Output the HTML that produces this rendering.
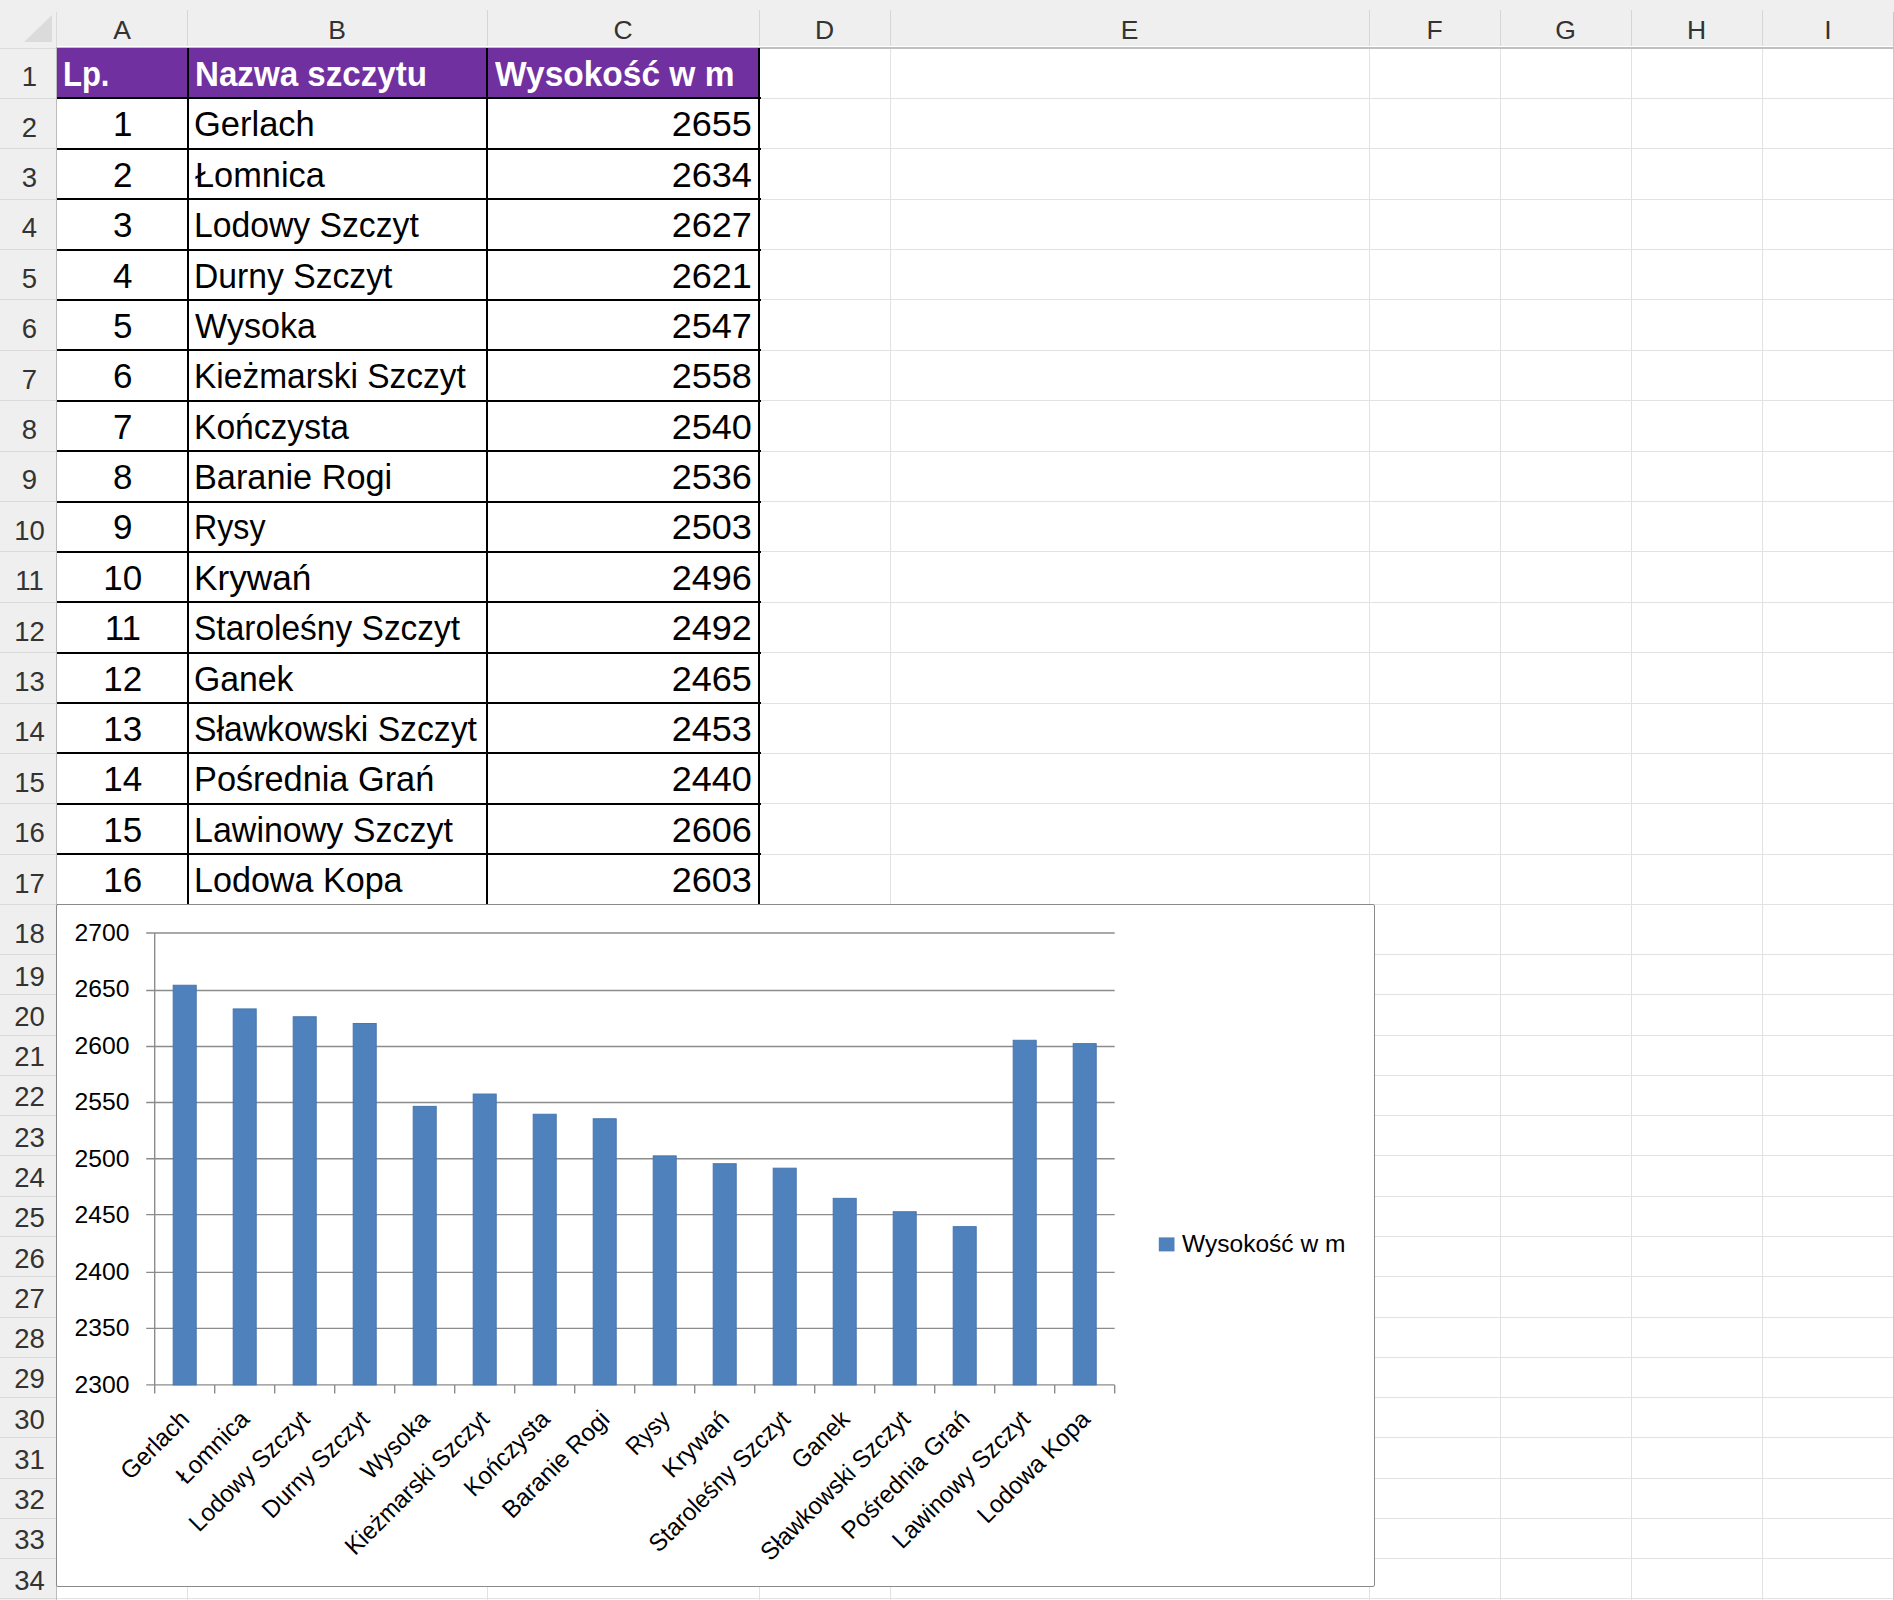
<!DOCTYPE html>
<html><head><meta charset="utf-8"><style>
html,body{margin:0;padding:0;width:1894px;height:1600px;overflow:hidden;background:#fff}
.r{position:absolute}
.t{position:absolute;white-space:pre;font-family:"Liberation Sans", sans-serif}
</style></head><body>
<div class="r" style="left:0.00px;top:0.00px;width:1894.00px;height:47.00px;background:#efefef;"></div>
<div class="r" style="left:0.00px;top:0.00px;width:56.00px;height:1600.00px;background:#efefef;"></div>
<svg class="r" style="left:0;top:0" width="57" height="47"><polygon points="24,42 52,15 52,42" fill="#dbdbdb"/></svg>
<div class="r" style="left:186.50px;top:47.00px;width:1.00px;height:1553.00px;background:#e2e2e2;"></div>
<div class="r" style="left:486.50px;top:47.00px;width:1.00px;height:1553.00px;background:#e2e2e2;"></div>
<div class="r" style="left:758.50px;top:47.00px;width:1.00px;height:1553.00px;background:#e2e2e2;"></div>
<div class="r" style="left:889.50px;top:47.00px;width:1.00px;height:1553.00px;background:#e2e2e2;"></div>
<div class="r" style="left:1368.50px;top:47.00px;width:1.00px;height:1553.00px;background:#e2e2e2;"></div>
<div class="r" style="left:1499.50px;top:47.00px;width:1.00px;height:1553.00px;background:#e2e2e2;"></div>
<div class="r" style="left:1630.50px;top:47.00px;width:1.00px;height:1553.00px;background:#e2e2e2;"></div>
<div class="r" style="left:1761.50px;top:47.00px;width:1.00px;height:1553.00px;background:#e2e2e2;"></div>
<div class="r" style="left:57.00px;top:97.89px;width:1837.00px;height:1.00px;background:#e2e2e2;"></div>
<div class="r" style="left:57.00px;top:148.28px;width:1837.00px;height:1.00px;background:#e2e2e2;"></div>
<div class="r" style="left:57.00px;top:198.67px;width:1837.00px;height:1.00px;background:#e2e2e2;"></div>
<div class="r" style="left:57.00px;top:249.06px;width:1837.00px;height:1.00px;background:#e2e2e2;"></div>
<div class="r" style="left:57.00px;top:299.45px;width:1837.00px;height:1.00px;background:#e2e2e2;"></div>
<div class="r" style="left:57.00px;top:349.84px;width:1837.00px;height:1.00px;background:#e2e2e2;"></div>
<div class="r" style="left:57.00px;top:400.23px;width:1837.00px;height:1.00px;background:#e2e2e2;"></div>
<div class="r" style="left:57.00px;top:450.62px;width:1837.00px;height:1.00px;background:#e2e2e2;"></div>
<div class="r" style="left:57.00px;top:501.01px;width:1837.00px;height:1.00px;background:#e2e2e2;"></div>
<div class="r" style="left:57.00px;top:551.40px;width:1837.00px;height:1.00px;background:#e2e2e2;"></div>
<div class="r" style="left:57.00px;top:601.79px;width:1837.00px;height:1.00px;background:#e2e2e2;"></div>
<div class="r" style="left:57.00px;top:652.18px;width:1837.00px;height:1.00px;background:#e2e2e2;"></div>
<div class="r" style="left:57.00px;top:702.57px;width:1837.00px;height:1.00px;background:#e2e2e2;"></div>
<div class="r" style="left:57.00px;top:752.96px;width:1837.00px;height:1.00px;background:#e2e2e2;"></div>
<div class="r" style="left:57.00px;top:803.35px;width:1837.00px;height:1.00px;background:#e2e2e2;"></div>
<div class="r" style="left:57.00px;top:853.74px;width:1837.00px;height:1.00px;background:#e2e2e2;"></div>
<div class="r" style="left:57.00px;top:904.13px;width:1837.00px;height:1.00px;background:#e2e2e2;"></div>
<div class="r" style="left:57.00px;top:954.10px;width:1837.00px;height:1.00px;background:#e2e2e2;"></div>
<div class="r" style="left:57.00px;top:994.37px;width:1837.00px;height:1.00px;background:#e2e2e2;"></div>
<div class="r" style="left:57.00px;top:1034.64px;width:1837.00px;height:1.00px;background:#e2e2e2;"></div>
<div class="r" style="left:57.00px;top:1074.91px;width:1837.00px;height:1.00px;background:#e2e2e2;"></div>
<div class="r" style="left:57.00px;top:1115.18px;width:1837.00px;height:1.00px;background:#e2e2e2;"></div>
<div class="r" style="left:57.00px;top:1155.45px;width:1837.00px;height:1.00px;background:#e2e2e2;"></div>
<div class="r" style="left:57.00px;top:1195.72px;width:1837.00px;height:1.00px;background:#e2e2e2;"></div>
<div class="r" style="left:57.00px;top:1235.99px;width:1837.00px;height:1.00px;background:#e2e2e2;"></div>
<div class="r" style="left:57.00px;top:1276.26px;width:1837.00px;height:1.00px;background:#e2e2e2;"></div>
<div class="r" style="left:57.00px;top:1316.53px;width:1837.00px;height:1.00px;background:#e2e2e2;"></div>
<div class="r" style="left:57.00px;top:1356.80px;width:1837.00px;height:1.00px;background:#e2e2e2;"></div>
<div class="r" style="left:57.00px;top:1397.07px;width:1837.00px;height:1.00px;background:#e2e2e2;"></div>
<div class="r" style="left:57.00px;top:1437.34px;width:1837.00px;height:1.00px;background:#e2e2e2;"></div>
<div class="r" style="left:57.00px;top:1477.61px;width:1837.00px;height:1.00px;background:#e2e2e2;"></div>
<div class="r" style="left:57.00px;top:1517.88px;width:1837.00px;height:1.00px;background:#e2e2e2;"></div>
<div class="r" style="left:57.00px;top:1558.15px;width:1837.00px;height:1.00px;background:#e2e2e2;"></div>
<div class="r" style="left:57.00px;top:1598.42px;width:1837.00px;height:1.00px;background:#e2e2e2;"></div>
<div class="r" style="left:186.50px;top:10.00px;width:1.00px;height:37.00px;background:#d6d6d6;"></div>
<div class="r" style="left:486.50px;top:10.00px;width:1.00px;height:37.00px;background:#d6d6d6;"></div>
<div class="r" style="left:758.50px;top:10.00px;width:1.00px;height:37.00px;background:#d6d6d6;"></div>
<div class="r" style="left:889.50px;top:10.00px;width:1.00px;height:37.00px;background:#d6d6d6;"></div>
<div class="r" style="left:1368.50px;top:10.00px;width:1.00px;height:37.00px;background:#d6d6d6;"></div>
<div class="r" style="left:1499.50px;top:10.00px;width:1.00px;height:37.00px;background:#d6d6d6;"></div>
<div class="r" style="left:1630.50px;top:10.00px;width:1.00px;height:37.00px;background:#d6d6d6;"></div>
<div class="r" style="left:1761.50px;top:10.00px;width:1.00px;height:37.00px;background:#d6d6d6;"></div>
<div class="r" style="left:0.00px;top:97.89px;width:56.00px;height:1.00px;background:#dadada;"></div>
<div class="r" style="left:0.00px;top:148.28px;width:56.00px;height:1.00px;background:#dadada;"></div>
<div class="r" style="left:0.00px;top:198.67px;width:56.00px;height:1.00px;background:#dadada;"></div>
<div class="r" style="left:0.00px;top:249.06px;width:56.00px;height:1.00px;background:#dadada;"></div>
<div class="r" style="left:0.00px;top:299.45px;width:56.00px;height:1.00px;background:#dadada;"></div>
<div class="r" style="left:0.00px;top:349.84px;width:56.00px;height:1.00px;background:#dadada;"></div>
<div class="r" style="left:0.00px;top:400.23px;width:56.00px;height:1.00px;background:#dadada;"></div>
<div class="r" style="left:0.00px;top:450.62px;width:56.00px;height:1.00px;background:#dadada;"></div>
<div class="r" style="left:0.00px;top:501.01px;width:56.00px;height:1.00px;background:#dadada;"></div>
<div class="r" style="left:0.00px;top:551.40px;width:56.00px;height:1.00px;background:#dadada;"></div>
<div class="r" style="left:0.00px;top:601.79px;width:56.00px;height:1.00px;background:#dadada;"></div>
<div class="r" style="left:0.00px;top:652.18px;width:56.00px;height:1.00px;background:#dadada;"></div>
<div class="r" style="left:0.00px;top:702.57px;width:56.00px;height:1.00px;background:#dadada;"></div>
<div class="r" style="left:0.00px;top:752.96px;width:56.00px;height:1.00px;background:#dadada;"></div>
<div class="r" style="left:0.00px;top:803.35px;width:56.00px;height:1.00px;background:#dadada;"></div>
<div class="r" style="left:0.00px;top:853.74px;width:56.00px;height:1.00px;background:#dadada;"></div>
<div class="r" style="left:0.00px;top:904.13px;width:56.00px;height:1.00px;background:#dadada;"></div>
<div class="r" style="left:0.00px;top:954.10px;width:56.00px;height:1.00px;background:#dadada;"></div>
<div class="r" style="left:0.00px;top:994.37px;width:56.00px;height:1.00px;background:#dadada;"></div>
<div class="r" style="left:0.00px;top:1034.64px;width:56.00px;height:1.00px;background:#dadada;"></div>
<div class="r" style="left:0.00px;top:1074.91px;width:56.00px;height:1.00px;background:#dadada;"></div>
<div class="r" style="left:0.00px;top:1115.18px;width:56.00px;height:1.00px;background:#dadada;"></div>
<div class="r" style="left:0.00px;top:1155.45px;width:56.00px;height:1.00px;background:#dadada;"></div>
<div class="r" style="left:0.00px;top:1195.72px;width:56.00px;height:1.00px;background:#dadada;"></div>
<div class="r" style="left:0.00px;top:1235.99px;width:56.00px;height:1.00px;background:#dadada;"></div>
<div class="r" style="left:0.00px;top:1276.26px;width:56.00px;height:1.00px;background:#dadada;"></div>
<div class="r" style="left:0.00px;top:1316.53px;width:56.00px;height:1.00px;background:#dadada;"></div>
<div class="r" style="left:0.00px;top:1356.80px;width:56.00px;height:1.00px;background:#dadada;"></div>
<div class="r" style="left:0.00px;top:1397.07px;width:56.00px;height:1.00px;background:#dadada;"></div>
<div class="r" style="left:0.00px;top:1437.34px;width:56.00px;height:1.00px;background:#dadada;"></div>
<div class="r" style="left:0.00px;top:1477.61px;width:56.00px;height:1.00px;background:#dadada;"></div>
<div class="r" style="left:0.00px;top:1517.88px;width:56.00px;height:1.00px;background:#dadada;"></div>
<div class="r" style="left:0.00px;top:1558.15px;width:56.00px;height:1.00px;background:#dadada;"></div>
<div class="r" style="left:0.00px;top:1598.42px;width:56.00px;height:1.00px;background:#dadada;"></div>
<div class="r" style="left:57.00px;top:46.00px;width:1837.00px;height:1.00px;background:#ffffff;"></div>
<div class="r" style="left:57.00px;top:47.00px;width:1837.00px;height:1.50px;background:#bfc1c1;"></div>
<div class="r" style="left:0.00px;top:47.50px;width:56.00px;height:1.00px;background:#dcdcdc;"></div>
<div class="r" style="left:56.00px;top:12.00px;width:1.00px;height:35.00px;background:#dadada;"></div>
<div class="r" style="left:56.00px;top:47.00px;width:1.20px;height:1553.00px;background:#bcbcbc;"></div>
<div class="r" style="left:1893.00px;top:12.00px;width:1.00px;height:1588.00px;background:#c8c8c8;"></div>
<div class="t" style="left:-78.00px;width:400px;text-align:center;top:16.77px;font-size:26.5px;line-height:26.5px;font-weight:400;color:#333;">A</div>
<div class="t" style="left:137.00px;width:400px;text-align:center;top:16.77px;font-size:26.5px;line-height:26.5px;font-weight:400;color:#333;">B</div>
<div class="t" style="left:423.00px;width:400px;text-align:center;top:16.77px;font-size:26.5px;line-height:26.5px;font-weight:400;color:#333;">C</div>
<div class="t" style="left:624.50px;width:400px;text-align:center;top:16.77px;font-size:26.5px;line-height:26.5px;font-weight:400;color:#333;">D</div>
<div class="t" style="left:929.50px;width:400px;text-align:center;top:16.77px;font-size:26.5px;line-height:26.5px;font-weight:400;color:#333;">E</div>
<div class="t" style="left:1234.50px;width:400px;text-align:center;top:16.77px;font-size:26.5px;line-height:26.5px;font-weight:400;color:#333;">F</div>
<div class="t" style="left:1365.50px;width:400px;text-align:center;top:16.77px;font-size:26.5px;line-height:26.5px;font-weight:400;color:#333;">G</div>
<div class="t" style="left:1496.50px;width:400px;text-align:center;top:16.77px;font-size:26.5px;line-height:26.5px;font-weight:400;color:#333;">H</div>
<div class="t" style="left:1628.00px;width:400px;text-align:center;top:16.77px;font-size:26.5px;line-height:26.5px;font-weight:400;color:#333;">I</div>
<div class="t" style="left:-170.50px;width:400px;text-align:center;top:63.32px;font-size:27.5px;line-height:27.5px;font-weight:400;color:#333;">1</div>
<div class="t" style="left:-170.50px;width:400px;text-align:center;top:113.71px;font-size:27.5px;line-height:27.5px;font-weight:400;color:#333;">2</div>
<div class="t" style="left:-170.50px;width:400px;text-align:center;top:164.10px;font-size:27.5px;line-height:27.5px;font-weight:400;color:#333;">3</div>
<div class="t" style="left:-170.50px;width:400px;text-align:center;top:214.49px;font-size:27.5px;line-height:27.5px;font-weight:400;color:#333;">4</div>
<div class="t" style="left:-170.50px;width:400px;text-align:center;top:264.88px;font-size:27.5px;line-height:27.5px;font-weight:400;color:#333;">5</div>
<div class="t" style="left:-170.50px;width:400px;text-align:center;top:315.27px;font-size:27.5px;line-height:27.5px;font-weight:400;color:#333;">6</div>
<div class="t" style="left:-170.50px;width:400px;text-align:center;top:365.66px;font-size:27.5px;line-height:27.5px;font-weight:400;color:#333;">7</div>
<div class="t" style="left:-170.50px;width:400px;text-align:center;top:416.05px;font-size:27.5px;line-height:27.5px;font-weight:400;color:#333;">8</div>
<div class="t" style="left:-170.50px;width:400px;text-align:center;top:466.44px;font-size:27.5px;line-height:27.5px;font-weight:400;color:#333;">9</div>
<div class="t" style="left:-170.50px;width:400px;text-align:center;top:516.83px;font-size:27.5px;line-height:27.5px;font-weight:400;color:#333;">10</div>
<div class="t" style="left:-170.50px;width:400px;text-align:center;top:567.22px;font-size:27.5px;line-height:27.5px;font-weight:400;color:#333;">11</div>
<div class="t" style="left:-170.50px;width:400px;text-align:center;top:617.61px;font-size:27.5px;line-height:27.5px;font-weight:400;color:#333;">12</div>
<div class="t" style="left:-170.50px;width:400px;text-align:center;top:668.00px;font-size:27.5px;line-height:27.5px;font-weight:400;color:#333;">13</div>
<div class="t" style="left:-170.50px;width:400px;text-align:center;top:718.39px;font-size:27.5px;line-height:27.5px;font-weight:400;color:#333;">14</div>
<div class="t" style="left:-170.50px;width:400px;text-align:center;top:768.78px;font-size:27.5px;line-height:27.5px;font-weight:400;color:#333;">15</div>
<div class="t" style="left:-170.50px;width:400px;text-align:center;top:819.17px;font-size:27.5px;line-height:27.5px;font-weight:400;color:#333;">16</div>
<div class="t" style="left:-170.50px;width:400px;text-align:center;top:869.56px;font-size:27.5px;line-height:27.5px;font-weight:400;color:#333;">17</div>
<div class="t" style="left:-170.50px;width:400px;text-align:center;top:919.95px;font-size:27.5px;line-height:27.5px;font-weight:400;color:#333;">18</div>
<div class="t" style="left:-170.50px;width:400px;text-align:center;top:962.62px;font-size:27.5px;line-height:27.5px;font-weight:400;color:#333;">19</div>
<div class="t" style="left:-170.50px;width:400px;text-align:center;top:1002.89px;font-size:27.5px;line-height:27.5px;font-weight:400;color:#333;">20</div>
<div class="t" style="left:-170.50px;width:400px;text-align:center;top:1043.16px;font-size:27.5px;line-height:27.5px;font-weight:400;color:#333;">21</div>
<div class="t" style="left:-170.50px;width:400px;text-align:center;top:1083.43px;font-size:27.5px;line-height:27.5px;font-weight:400;color:#333;">22</div>
<div class="t" style="left:-170.50px;width:400px;text-align:center;top:1123.70px;font-size:27.5px;line-height:27.5px;font-weight:400;color:#333;">23</div>
<div class="t" style="left:-170.50px;width:400px;text-align:center;top:1163.97px;font-size:27.5px;line-height:27.5px;font-weight:400;color:#333;">24</div>
<div class="t" style="left:-170.50px;width:400px;text-align:center;top:1204.24px;font-size:27.5px;line-height:27.5px;font-weight:400;color:#333;">25</div>
<div class="t" style="left:-170.50px;width:400px;text-align:center;top:1244.51px;font-size:27.5px;line-height:27.5px;font-weight:400;color:#333;">26</div>
<div class="t" style="left:-170.50px;width:400px;text-align:center;top:1284.78px;font-size:27.5px;line-height:27.5px;font-weight:400;color:#333;">27</div>
<div class="t" style="left:-170.50px;width:400px;text-align:center;top:1325.05px;font-size:27.5px;line-height:27.5px;font-weight:400;color:#333;">28</div>
<div class="t" style="left:-170.50px;width:400px;text-align:center;top:1365.32px;font-size:27.5px;line-height:27.5px;font-weight:400;color:#333;">29</div>
<div class="t" style="left:-170.50px;width:400px;text-align:center;top:1405.59px;font-size:27.5px;line-height:27.5px;font-weight:400;color:#333;">30</div>
<div class="t" style="left:-170.50px;width:400px;text-align:center;top:1445.86px;font-size:27.5px;line-height:27.5px;font-weight:400;color:#333;">31</div>
<div class="t" style="left:-170.50px;width:400px;text-align:center;top:1486.13px;font-size:27.5px;line-height:27.5px;font-weight:400;color:#333;">32</div>
<div class="t" style="left:-170.50px;width:400px;text-align:center;top:1526.40px;font-size:27.5px;line-height:27.5px;font-weight:400;color:#333;">33</div>
<div class="t" style="left:-170.50px;width:400px;text-align:center;top:1566.67px;font-size:27.5px;line-height:27.5px;font-weight:400;color:#333;">34</div>
<div class="r" style="left:57.00px;top:47.50px;width:703.00px;height:50.89px;background:#7030a0;"></div>
<div class="r" style="left:57.00px;top:97.39px;width:704.00px;height:2.00px;background:#000;"></div>
<div class="r" style="left:57.00px;top:147.78px;width:704.00px;height:2.00px;background:#000;"></div>
<div class="r" style="left:57.00px;top:198.17px;width:704.00px;height:2.00px;background:#000;"></div>
<div class="r" style="left:57.00px;top:248.56px;width:704.00px;height:2.00px;background:#000;"></div>
<div class="r" style="left:57.00px;top:298.95px;width:704.00px;height:2.00px;background:#000;"></div>
<div class="r" style="left:57.00px;top:349.34px;width:704.00px;height:2.00px;background:#000;"></div>
<div class="r" style="left:57.00px;top:399.73px;width:704.00px;height:2.00px;background:#000;"></div>
<div class="r" style="left:57.00px;top:450.12px;width:704.00px;height:2.00px;background:#000;"></div>
<div class="r" style="left:57.00px;top:500.51px;width:704.00px;height:2.00px;background:#000;"></div>
<div class="r" style="left:57.00px;top:550.90px;width:704.00px;height:2.00px;background:#000;"></div>
<div class="r" style="left:57.00px;top:601.29px;width:704.00px;height:2.00px;background:#000;"></div>
<div class="r" style="left:57.00px;top:651.68px;width:704.00px;height:2.00px;background:#000;"></div>
<div class="r" style="left:57.00px;top:702.07px;width:704.00px;height:2.00px;background:#000;"></div>
<div class="r" style="left:57.00px;top:752.46px;width:704.00px;height:2.00px;background:#000;"></div>
<div class="r" style="left:57.00px;top:802.85px;width:704.00px;height:2.00px;background:#000;"></div>
<div class="r" style="left:57.00px;top:853.24px;width:704.00px;height:2.00px;background:#000;"></div>
<div class="r" style="left:57.00px;top:903.63px;width:704.00px;height:2.00px;background:#000;"></div>
<div class="r" style="left:187.03px;top:48.00px;width:1.75px;height:856.63px;background:#000;"></div>
<div class="r" style="left:486.23px;top:48.00px;width:1.75px;height:856.63px;background:#000;"></div>
<div class="r" style="left:758.38px;top:48.00px;width:1.75px;height:856.63px;background:#000;"></div>
<div class="t" style="left:63.23px;top:56.37px;font-size:35px;line-height:35px;font-weight:700;color:#fff;transform:scaleX(0.8854);transform-origin:0 50%;">Lp.</div>
<div class="t" style="left:194.61px;top:56.37px;font-size:35px;line-height:35px;font-weight:700;color:#fff;transform:scaleX(0.9469);transform-origin:0 50%;">Nazwa szczytu</div>
<div class="t" style="left:495.10px;top:56.37px;font-size:35px;line-height:35px;font-weight:700;color:#fff;transform:scaleX(0.9569);transform-origin:0 50%;">Wysokość w m</div>
<div class="t" style="left:-77.20px;width:400px;text-align:center;top:106.36px;font-size:35px;line-height:35px;font-weight:400;color:#000;">1</div>
<div class="t" style="left:193.73px;top:106.36px;font-size:35px;line-height:35px;font-weight:400;color:#000;transform:scaleX(0.9856);transform-origin:0 50%;">Gerlach</div>
<div class="t" style="right:1141.80px;top:106.36px;font-size:35px;line-height:35px;font-weight:400;color:#000;transform:scaleX(1.0300);transform-origin:100% 50%;">2655</div>
<div class="t" style="left:-77.20px;width:400px;text-align:center;top:156.75px;font-size:35px;line-height:35px;font-weight:400;color:#000;">2</div>
<div class="t" style="left:195.20px;top:156.75px;font-size:35px;line-height:35px;font-weight:400;color:#000;transform:scaleX(0.9818);transform-origin:0 50%;">Łomnica</div>
<div class="t" style="right:1141.80px;top:156.75px;font-size:35px;line-height:35px;font-weight:400;color:#000;transform:scaleX(1.0300);transform-origin:100% 50%;">2634</div>
<div class="t" style="left:-77.20px;width:400px;text-align:center;top:207.14px;font-size:35px;line-height:35px;font-weight:400;color:#000;">3</div>
<div class="t" style="left:193.91px;top:207.14px;font-size:35px;line-height:35px;font-weight:400;color:#000;transform:scaleX(0.9630);transform-origin:0 50%;">Lodowy Szczyt</div>
<div class="t" style="right:1141.80px;top:207.14px;font-size:35px;line-height:35px;font-weight:400;color:#000;transform:scaleX(1.0300);transform-origin:100% 50%;">2627</div>
<div class="t" style="left:-77.20px;width:400px;text-align:center;top:257.53px;font-size:35px;line-height:35px;font-weight:400;color:#000;">4</div>
<div class="t" style="left:193.91px;top:257.53px;font-size:35px;line-height:35px;font-weight:400;color:#000;transform:scaleX(0.9621);transform-origin:0 50%;">Durny Szczyt</div>
<div class="t" style="right:1141.80px;top:257.53px;font-size:35px;line-height:35px;font-weight:400;color:#000;transform:scaleX(1.0300);transform-origin:100% 50%;">2621</div>
<div class="t" style="left:-77.20px;width:400px;text-align:center;top:307.92px;font-size:35px;line-height:35px;font-weight:400;color:#000;">5</div>
<div class="t" style="left:195.30px;top:307.92px;font-size:35px;line-height:35px;font-weight:400;color:#000;transform:scaleX(0.9742);transform-origin:0 50%;">Wysoka</div>
<div class="t" style="right:1141.80px;top:307.92px;font-size:35px;line-height:35px;font-weight:400;color:#000;transform:scaleX(1.0300);transform-origin:100% 50%;">2547</div>
<div class="t" style="left:-77.20px;width:400px;text-align:center;top:358.31px;font-size:35px;line-height:35px;font-weight:400;color:#000;">6</div>
<div class="t" style="left:193.93px;top:358.31px;font-size:35px;line-height:35px;font-weight:400;color:#000;transform:scaleX(0.9573);transform-origin:0 50%;">Kieżmarski Szczyt</div>
<div class="t" style="right:1141.80px;top:358.31px;font-size:35px;line-height:35px;font-weight:400;color:#000;transform:scaleX(1.0300);transform-origin:100% 50%;">2558</div>
<div class="t" style="left:-77.20px;width:400px;text-align:center;top:408.70px;font-size:35px;line-height:35px;font-weight:400;color:#000;">7</div>
<div class="t" style="left:193.92px;top:408.70px;font-size:35px;line-height:35px;font-weight:400;color:#000;transform:scaleX(0.9597);transform-origin:0 50%;">Kończysta</div>
<div class="t" style="right:1141.80px;top:408.70px;font-size:35px;line-height:35px;font-weight:400;color:#000;transform:scaleX(1.0300);transform-origin:100% 50%;">2540</div>
<div class="t" style="left:-77.20px;width:400px;text-align:center;top:459.09px;font-size:35px;line-height:35px;font-weight:400;color:#000;">8</div>
<div class="t" style="left:193.86px;top:459.09px;font-size:35px;line-height:35px;font-weight:400;color:#000;transform:scaleX(0.9797);transform-origin:0 50%;">Baranie Rogi</div>
<div class="t" style="right:1141.80px;top:459.09px;font-size:35px;line-height:35px;font-weight:400;color:#000;transform:scaleX(1.0300);transform-origin:100% 50%;">2536</div>
<div class="t" style="left:-77.20px;width:400px;text-align:center;top:509.48px;font-size:35px;line-height:35px;font-weight:400;color:#000;">9</div>
<div class="t" style="left:194.04px;top:509.48px;font-size:35px;line-height:35px;font-weight:400;color:#000;transform:scaleX(0.9187);transform-origin:0 50%;">Rysy</div>
<div class="t" style="right:1141.80px;top:509.48px;font-size:35px;line-height:35px;font-weight:400;color:#000;transform:scaleX(1.0300);transform-origin:100% 50%;">2503</div>
<div class="t" style="left:-77.20px;width:400px;text-align:center;top:559.87px;font-size:35px;line-height:35px;font-weight:400;color:#000;">10</div>
<div class="t" style="left:193.79px;top:559.87px;font-size:35px;line-height:35px;font-weight:400;color:#000;transform:scaleX(1.0045);transform-origin:0 50%;">Krywań</div>
<div class="t" style="right:1141.80px;top:559.87px;font-size:35px;line-height:35px;font-weight:400;color:#000;transform:scaleX(1.0300);transform-origin:100% 50%;">2496</div>
<div class="t" style="left:-77.20px;width:400px;text-align:center;top:610.26px;font-size:35px;line-height:35px;font-weight:400;color:#000;">11</div>
<div class="t" style="left:193.79px;top:610.26px;font-size:35px;line-height:35px;font-weight:400;color:#000;transform:scaleX(0.9569);transform-origin:0 50%;">Staroleśny Szczyt</div>
<div class="t" style="right:1141.80px;top:610.26px;font-size:35px;line-height:35px;font-weight:400;color:#000;transform:scaleX(1.0300);transform-origin:100% 50%;">2492</div>
<div class="t" style="left:-77.20px;width:400px;text-align:center;top:660.65px;font-size:35px;line-height:35px;font-weight:400;color:#000;">12</div>
<div class="t" style="left:193.77px;top:660.65px;font-size:35px;line-height:35px;font-weight:400;color:#000;transform:scaleX(0.9644);transform-origin:0 50%;">Ganek</div>
<div class="t" style="right:1141.80px;top:660.65px;font-size:35px;line-height:35px;font-weight:400;color:#000;transform:scaleX(1.0300);transform-origin:100% 50%;">2465</div>
<div class="t" style="left:-77.20px;width:400px;text-align:center;top:711.04px;font-size:35px;line-height:35px;font-weight:400;color:#000;">13</div>
<div class="t" style="left:193.77px;top:711.04px;font-size:35px;line-height:35px;font-weight:400;color:#000;transform:scaleX(0.9634);transform-origin:0 50%;">Sławkowski Szczyt</div>
<div class="t" style="right:1141.80px;top:711.04px;font-size:35px;line-height:35px;font-weight:400;color:#000;transform:scaleX(1.0300);transform-origin:100% 50%;">2453</div>
<div class="t" style="left:-77.20px;width:400px;text-align:center;top:761.43px;font-size:35px;line-height:35px;font-weight:400;color:#000;">14</div>
<div class="t" style="left:194.36px;top:761.43px;font-size:35px;line-height:35px;font-weight:400;color:#000;transform:scaleX(0.9800);transform-origin:0 50%;">Pośrednia Grań</div>
<div class="t" style="right:1141.80px;top:761.43px;font-size:35px;line-height:35px;font-weight:400;color:#000;transform:scaleX(1.0300);transform-origin:100% 50%;">2440</div>
<div class="t" style="left:-77.20px;width:400px;text-align:center;top:811.82px;font-size:35px;line-height:35px;font-weight:400;color:#000;">15</div>
<div class="t" style="left:193.89px;top:811.82px;font-size:35px;line-height:35px;font-weight:400;color:#000;transform:scaleX(0.9715);transform-origin:0 50%;">Lawinowy Szczyt</div>
<div class="t" style="right:1141.80px;top:811.82px;font-size:35px;line-height:35px;font-weight:400;color:#000;transform:scaleX(1.0300);transform-origin:100% 50%;">2606</div>
<div class="t" style="left:-77.20px;width:400px;text-align:center;top:862.21px;font-size:35px;line-height:35px;font-weight:400;color:#000;">16</div>
<div class="t" style="left:193.88px;top:862.21px;font-size:35px;line-height:35px;font-weight:400;color:#000;transform:scaleX(0.9744);transform-origin:0 50%;">Lodowa Kopa</div>
<div class="t" style="right:1141.80px;top:862.21px;font-size:35px;line-height:35px;font-weight:400;color:#000;transform:scaleX(1.0300);transform-origin:100% 50%;">2603</div>
<div class="r" style="left:55.85px;top:903.65px;width:1317.00px;height:681.60px;background:#fff;border:1.5px solid #8a8a8a;border-radius:2px"></div>
<svg class="r" style="left:0;top:0" width="1894" height="1600"><line x1="146.2" y1="933.0" x2="1114.7" y2="933.0" stroke="#8c8c8c" stroke-width="1.4"/><line x1="146.2" y1="990.5" x2="1114.7" y2="990.5" stroke="#8c8c8c" stroke-width="1.4"/><line x1="146.2" y1="1046.5" x2="1114.7" y2="1046.5" stroke="#8c8c8c" stroke-width="1.4"/><line x1="146.2" y1="1102.5" x2="1114.7" y2="1102.5" stroke="#8c8c8c" stroke-width="1.4"/><line x1="146.2" y1="1158.75" x2="1114.7" y2="1158.75" stroke="#8c8c8c" stroke-width="1.4"/><line x1="146.2" y1="1214.6" x2="1114.7" y2="1214.6" stroke="#8c8c8c" stroke-width="1.4"/><line x1="146.2" y1="1272.4" x2="1114.7" y2="1272.4" stroke="#8c8c8c" stroke-width="1.4"/><line x1="146.2" y1="1328.4" x2="1114.7" y2="1328.4" stroke="#8c8c8c" stroke-width="1.4"/><line x1="146.2" y1="1384.9" x2="1114.7" y2="1384.9" stroke="#8c8c8c" stroke-width="1.4"/><line x1="154.7" y1="933.0" x2="154.7" y2="1384.9" stroke="#8c8c8c" stroke-width="1.4"/><line x1="154.7" y1="1384.9" x2="154.7" y2="1393.4" stroke="#8c8c8c" stroke-width="1.4"/><line x1="214.7" y1="1384.9" x2="214.7" y2="1393.4" stroke="#8c8c8c" stroke-width="1.4"/><line x1="274.7" y1="1384.9" x2="274.7" y2="1393.4" stroke="#8c8c8c" stroke-width="1.4"/><line x1="334.7" y1="1384.9" x2="334.7" y2="1393.4" stroke="#8c8c8c" stroke-width="1.4"/><line x1="394.7" y1="1384.9" x2="394.7" y2="1393.4" stroke="#8c8c8c" stroke-width="1.4"/><line x1="454.7" y1="1384.9" x2="454.7" y2="1393.4" stroke="#8c8c8c" stroke-width="1.4"/><line x1="514.7" y1="1384.9" x2="514.7" y2="1393.4" stroke="#8c8c8c" stroke-width="1.4"/><line x1="574.7" y1="1384.9" x2="574.7" y2="1393.4" stroke="#8c8c8c" stroke-width="1.4"/><line x1="634.7" y1="1384.9" x2="634.7" y2="1393.4" stroke="#8c8c8c" stroke-width="1.4"/><line x1="694.7" y1="1384.9" x2="694.7" y2="1393.4" stroke="#8c8c8c" stroke-width="1.4"/><line x1="754.7" y1="1384.9" x2="754.7" y2="1393.4" stroke="#8c8c8c" stroke-width="1.4"/><line x1="814.7" y1="1384.9" x2="814.7" y2="1393.4" stroke="#8c8c8c" stroke-width="1.4"/><line x1="874.7" y1="1384.9" x2="874.7" y2="1393.4" stroke="#8c8c8c" stroke-width="1.4"/><line x1="934.7" y1="1384.9" x2="934.7" y2="1393.4" stroke="#8c8c8c" stroke-width="1.4"/><line x1="994.7" y1="1384.9" x2="994.7" y2="1393.4" stroke="#8c8c8c" stroke-width="1.4"/><line x1="1054.7" y1="1384.9" x2="1054.7" y2="1393.4" stroke="#8c8c8c" stroke-width="1.4"/><line x1="1114.7" y1="1384.9" x2="1114.7" y2="1393.4" stroke="#8c8c8c" stroke-width="1.4"/><rect x="173.2" y="985.25" width="23" height="399.65" fill="#4f81bd" stroke="#4776ae" stroke-width="1"/><rect x="233.2" y="1008.92" width="23" height="375.98" fill="#4f81bd" stroke="#4776ae" stroke-width="1"/><rect x="293.2" y="1016.76" width="23" height="368.14" fill="#4f81bd" stroke="#4776ae" stroke-width="1"/><rect x="353.2" y="1023.48" width="23" height="361.42" fill="#4f81bd" stroke="#4776ae" stroke-width="1"/><rect x="413.2" y="1106.38" width="23" height="278.53" fill="#4f81bd" stroke="#4776ae" stroke-width="1"/><rect x="473.2" y="1094.04" width="23" height="290.86" fill="#4f81bd" stroke="#4776ae" stroke-width="1"/><rect x="533.2" y="1114.25" width="23" height="270.65" fill="#4f81bd" stroke="#4776ae" stroke-width="1"/><rect x="593.2" y="1118.75" width="23" height="266.15" fill="#4f81bd" stroke="#4776ae" stroke-width="1"/><rect x="653.2" y="1155.88" width="23" height="229.03" fill="#4f81bd" stroke="#4776ae" stroke-width="1"/><rect x="713.2" y="1163.72" width="23" height="221.18" fill="#4f81bd" stroke="#4776ae" stroke-width="1"/><rect x="773.2" y="1168.19" width="23" height="216.71" fill="#4f81bd" stroke="#4776ae" stroke-width="1"/><rect x="833.2" y="1198.35" width="23" height="186.56" fill="#4f81bd" stroke="#4776ae" stroke-width="1"/><rect x="893.2" y="1211.75" width="23" height="173.15" fill="#4f81bd" stroke="#4776ae" stroke-width="1"/><rect x="953.2" y="1226.66" width="23" height="158.24" fill="#4f81bd" stroke="#4776ae" stroke-width="1"/><rect x="1013.2" y="1040.28" width="23" height="344.62" fill="#4f81bd" stroke="#4776ae" stroke-width="1"/><rect x="1073.2" y="1043.64" width="23" height="341.26" fill="#4f81bd" stroke="#4776ae" stroke-width="1"/><rect x="1158.8" y="1237.4" width="15.7" height="14" fill="#4f81bd"/></svg>
<div class="t" style="right:1764.50px;top:920.69px;font-size:24.7px;line-height:24.7px;font-weight:400;color:#000;">2700</div>
<div class="t" style="right:1764.50px;top:977.18px;font-size:24.7px;line-height:24.7px;font-weight:400;color:#000;">2650</div>
<div class="t" style="right:1764.50px;top:1033.67px;font-size:24.7px;line-height:24.7px;font-weight:400;color:#000;">2600</div>
<div class="t" style="right:1764.50px;top:1090.15px;font-size:24.7px;line-height:24.7px;font-weight:400;color:#000;">2550</div>
<div class="t" style="right:1764.50px;top:1146.64px;font-size:24.7px;line-height:24.7px;font-weight:400;color:#000;">2500</div>
<div class="t" style="right:1764.50px;top:1203.13px;font-size:24.7px;line-height:24.7px;font-weight:400;color:#000;">2450</div>
<div class="t" style="right:1764.50px;top:1259.62px;font-size:24.7px;line-height:24.7px;font-weight:400;color:#000;">2400</div>
<div class="t" style="right:1764.50px;top:1316.10px;font-size:24.7px;line-height:24.7px;font-weight:400;color:#000;">2350</div>
<div class="t" style="right:1764.50px;top:1372.59px;font-size:24.7px;line-height:24.7px;font-weight:400;color:#000;">2300</div>
<div class="t" style="left:1181.80px;top:1231.89px;font-size:24.7px;line-height:24.7px;font-weight:400;color:#000;transform:scaleX(0.9939);transform-origin:0 50%;">Wysokość w m</div>
<div class="t" style="right:1708.30px;top:1402.55px;font-size:24.7px;line-height:24.7px;transform-origin:100% 50%;transform:rotate(-45deg) scaleX(0.9856)">Gerlach</div>
<div class="t" style="right:1648.30px;top:1402.55px;font-size:24.7px;line-height:24.7px;transform-origin:100% 50%;transform:rotate(-45deg) scaleX(0.9818)">Łomnica</div>
<div class="t" style="right:1588.30px;top:1402.55px;font-size:24.7px;line-height:24.7px;transform-origin:100% 50%;transform:rotate(-45deg) scaleX(0.9630)">Lodowy Szczyt</div>
<div class="t" style="right:1528.30px;top:1402.55px;font-size:24.7px;line-height:24.7px;transform-origin:100% 50%;transform:rotate(-45deg) scaleX(0.9621)">Durny Szczyt</div>
<div class="t" style="right:1468.30px;top:1402.55px;font-size:24.7px;line-height:24.7px;transform-origin:100% 50%;transform:rotate(-45deg) scaleX(0.9742)">Wysoka</div>
<div class="t" style="right:1408.30px;top:1402.55px;font-size:24.7px;line-height:24.7px;transform-origin:100% 50%;transform:rotate(-45deg) scaleX(0.9573)">Kieżmarski Szczyt</div>
<div class="t" style="right:1348.30px;top:1402.55px;font-size:24.7px;line-height:24.7px;transform-origin:100% 50%;transform:rotate(-45deg) scaleX(0.9597)">Kończysta</div>
<div class="t" style="right:1288.30px;top:1402.55px;font-size:24.7px;line-height:24.7px;transform-origin:100% 50%;transform:rotate(-45deg) scaleX(0.9797)">Baranie Rogi</div>
<div class="t" style="right:1228.30px;top:1402.55px;font-size:24.7px;line-height:24.7px;transform-origin:100% 50%;transform:rotate(-45deg) scaleX(0.9187)">Rysy</div>
<div class="t" style="right:1168.30px;top:1402.55px;font-size:24.7px;line-height:24.7px;transform-origin:100% 50%;transform:rotate(-45deg) scaleX(1.0045)">Krywań</div>
<div class="t" style="right:1108.30px;top:1402.55px;font-size:24.7px;line-height:24.7px;transform-origin:100% 50%;transform:rotate(-45deg) scaleX(0.9569)">Staroleśny Szczyt</div>
<div class="t" style="right:1048.30px;top:1402.55px;font-size:24.7px;line-height:24.7px;transform-origin:100% 50%;transform:rotate(-45deg) scaleX(0.9644)">Ganek</div>
<div class="t" style="right:988.30px;top:1402.55px;font-size:24.7px;line-height:24.7px;transform-origin:100% 50%;transform:rotate(-45deg) scaleX(0.9634)">Sławkowski Szczyt</div>
<div class="t" style="right:928.30px;top:1402.55px;font-size:24.7px;line-height:24.7px;transform-origin:100% 50%;transform:rotate(-45deg) scaleX(0.9800)">Pośrednia Grań</div>
<div class="t" style="right:868.30px;top:1402.55px;font-size:24.7px;line-height:24.7px;transform-origin:100% 50%;transform:rotate(-45deg) scaleX(0.9715)">Lawinowy Szczyt</div>
<div class="t" style="right:808.30px;top:1402.55px;font-size:24.7px;line-height:24.7px;transform-origin:100% 50%;transform:rotate(-45deg) scaleX(0.9744)">Lodowa Kopa</div>
</body></html>
